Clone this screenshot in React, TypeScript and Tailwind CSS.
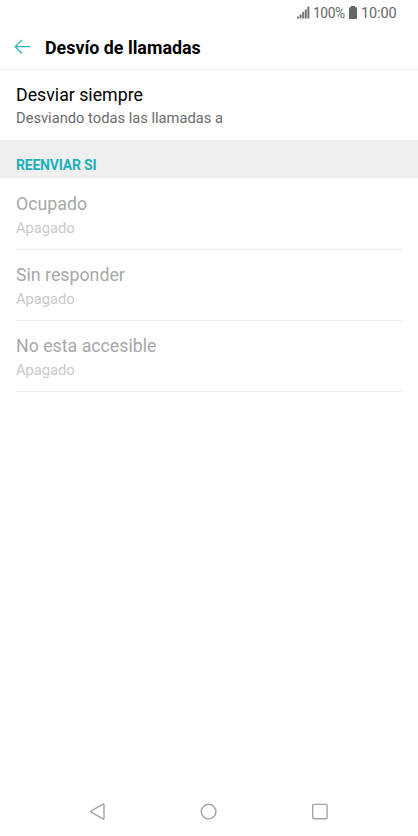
import React from "react";

interface Condition {
  title: string;
  status: string;
}

const conditions: Condition[] = [
  { title: "Ocupado", status: "Apagado" },
  { title: "Sin responder", status: "Apagado" },
  { title: "No esta accesible", status: "Apagado" },
];

function SignalIcon() {
  return (
    <svg width="13" height="13" viewBox="0 0 13 13" fill="#757575">
      <rect x="0" y="10.5" width="2" height="2" />
      <rect x="2.6" y="8.5" width="2" height="4" />
      <rect x="5.2" y="6" width="2" height="6.5" />
      <rect x="7.8" y="3.5" width="2" height="9" />
      <rect x="10.4" y="0.5" width="2" height="12" />
    </svg>
  );
}

function BatteryIcon() {
  return (
    <svg width="8" height="13" viewBox="0 0 8 13" fill="#666666">
      <path d="M2 0h4v1.2h1.5q.5 0 .5.5v10.8q0 .5-.5.5h-7q-.5 0-.5-.5V1.7q0-.5.5-.5H2z" />
    </svg>
  );
}

function StatusBar() {
  return (
    <div className="flex h-[25px] items-center pl-[297px] text-[#666666]">
      <SignalIcon />
      <span className="mt-0.5 ml-[3px] w-9 text-[13.8px] tracking-[-0.4px]">100%</span>
      <BatteryIcon />
      <span className="mt-0.5 ml-1 text-[14.5px] tracking-[-0.1px]">10:00</span>
    </div>
  );
}

function Header() {
  return (
    <header className="flex h-[45px] items-center border-b border-[#f0f0f0] pl-[14px]">
      <button aria-label="Atrás">
        <svg width="17" height="16" viewBox="0 0 17 16" fill="none" stroke="#2fb4c0" strokeWidth="1.3">
          <path d="M16.2 7.7H1.2M8 .9L1.2 7.7 8 14.5" />
        </svg>
      </button>
      <h1 className="mt-0.5 ml-[14px] text-[17.85px] font-bold text-black">Desvío de llamadas</h1>
    </header>
  );
}

function NavBar() {
  return (
    <nav className="flex h-[49px] items-center">
      <svg width="418" height="49" viewBox="0 0 418 49" fill="none" stroke="#a3a3a3" strokeWidth="1.4">
        <path d="M91.6 23.7l11-6.4q1.4-.8 1.4.8v12.8q0 1.6-1.4.8l-11-6.4q-1.4-.8 0-1.6z" />
        <circle cx="208.6" cy="24.6" r="7.3" />
        <rect x="312.7" y="17.4" width="14.4" height="14.4" rx="1.2" />
      </svg>
    </nav>
  );
}

export default function App() {
  return (
    <div className="flex h-[836px] w-[418px] flex-col bg-white font-[Roboto,sans-serif]">
      <StatusBar />
      <Header />
      <main className="flex-1">
        <section className="h-[70px] px-4 pt-[13px]">
          <h2 className="text-[17.75px] leading-6 text-black">Desviar siempre</h2>
          <p className="text-[14.7px] leading-[23px] text-[#6b6b6b]">Desviando todas las llamadas a</p>
        </section>
        <div className="h-[38px] bg-[#efefef] px-4 pt-4">
          <h3 className="text-[14px] leading-[19px] font-bold tracking-[-0.2px] text-[#1cb0bb]">REENVIAR SI</h3>
        </div>
        <ul className="px-4 pt-px">
          {conditions.map((item) => (
            <li key={item.title} className="h-[71px] border-b border-[#ededed] pt-[13px]">
              <h2 className="text-[17.75px] leading-6 text-[#a8a8a8]">{item.title}</h2>
              <p className="text-[14.7px] leading-6 text-[#c9c9c9]">{item.status}</p>
            </li>
          ))}
        </ul>
      </main>
      <NavBar />
    </div>
  );
}
